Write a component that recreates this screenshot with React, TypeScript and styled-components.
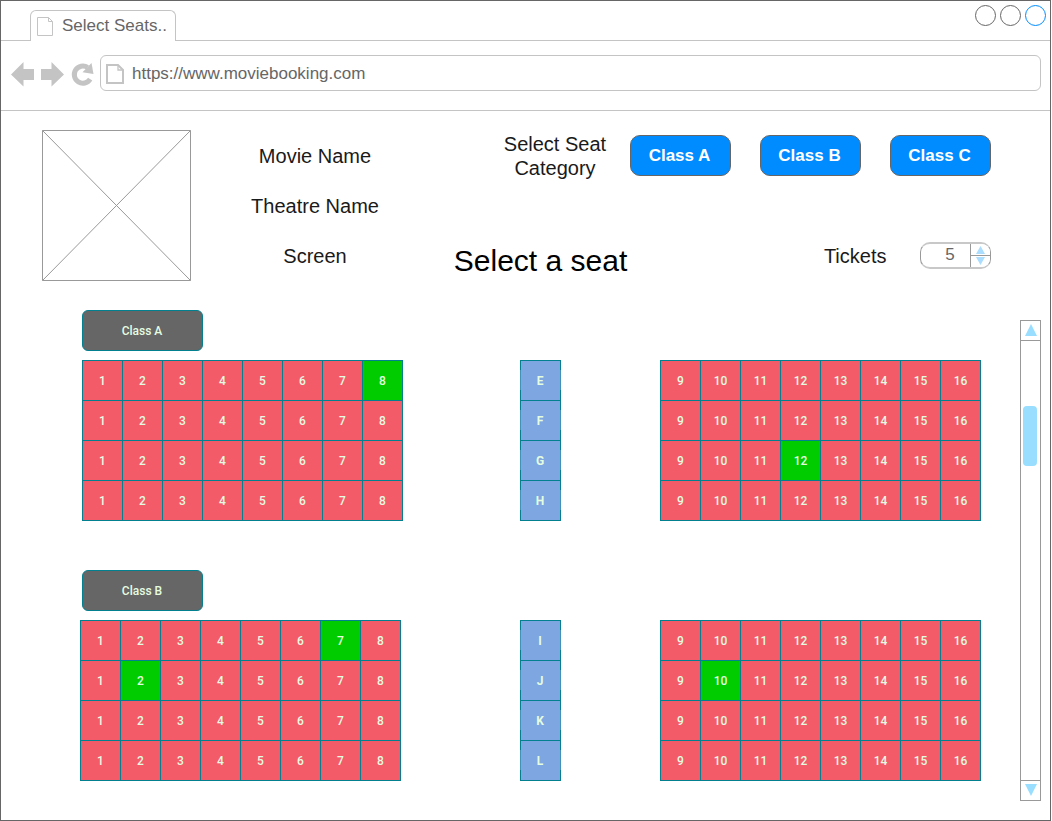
import React from "react";
import styled, { createGlobalStyle } from "styled-components";

const GlobalStyle = createGlobalStyle`
  *, *::before, *::after { box-sizing: border-box; }
  body { margin: 0; background: #fff; font-family: "Liberation Sans", Arial, sans-serif; }
  button { font: inherit; padding: 0; cursor: pointer; }
`;

const BrowserWindow = styled.div`
  display: flex;
  flex-direction: column;
  width: 1051px;
  height: 821px;
  border: 1px solid #666;
  background: #fff;
`;

const TabBar = styled.header`
  display: flex;
  justify-content: space-between;
  height: 40px;
  padding: 9px 4px 0 29px;
  border-bottom: 1px solid #c4c4c4;
`;

const Tab = styled.div`
  display: flex;
  align-items: center;
  gap: 9px;
  width: 146px;
  height: 31px;
  padding: 0 0 0 6px;
  border: 1px solid #c4c4c4;
  border-bottom: 0;
  border-radius: 6px 6px 0 0;
  background: #fff;
  color: #666;
  font-size: 17px;
  white-space: nowrap;
`;

const WindowControls = styled.div`
  display: flex;
  gap: 4px;
  margin-top: -5px;
`;

const Control = styled.span<{ $color: string }>`
  width: 21px;
  height: 21px;
  border: 1px solid ${(p) => p.$color};
  border-radius: 50%;
`;

const NavBar = styled.nav`
  display: flex;
  align-items: flex-start;
  height: 70px;
  padding: 14px 9px 0 10px;
  border-bottom: 1px solid #c4c4c4;
`;

const NavIcons = styled.svg`
  flex: none;
  width: 89px;
  height: 36px;
  fill: #c4c4c4;
`;

const AddressBar = styled.div`
  display: flex;
  flex: 1;
  align-items: center;
  gap: 8px;
  height: 36px;
  padding: 2px 5px 0;
  border: 1px solid #c4c4c4;
  border-radius: 6px;
  color: #666;
  font-size: 17px;
`;

const Summary = styled.section`
  display: flex;
  height: 170px;
  padding: 19px 59px 0 41px;
`;

const Poster = styled.svg`
  flex: none;
  width: 149px;
  height: 151px;
  fill: none;
  stroke: #999;
`;

const MovieInfo = styled.div`
  width: 248px;
  padding-top: 1px;
  font-size: 20px;
  line-height: 50px;
  text-align: center;
  color: #1a1a1a;
`;

const Booking = styled.div`
  display: flex;
  flex: 1;
  flex-direction: column;
`;

const CategoryRow = styled.div`
  display: flex;
  align-items: flex-start;
  justify-content: flex-end;
  gap: 29px;
  padding-top: 5px;
`;

const CategoryLabel = styled.div`
  width: 110px;
  margin: -3px -9px 0 0;
  font-size: 20px;
  line-height: 24px;
  text-align: center;
  color: #1a1a1a;
`;

const CategoryButton = styled.button`
  width: 101px;
  height: 41px;
  padding-right: 2px;
  border: 1px solid #666;
  border-radius: 10px;
  background: #008cff;
  color: #fff;
  font-size: 17px;
  font-weight: 700;
`;

const TicketRow = styled.div`
  display: flex;
  align-items: center;
  height: 40px;
  margin-top: 58px;
`;

const Heading = styled.h1`
  width: 203px;
  margin: 5px 0 0;
  font-size: 30px;
  font-weight: 400;
  line-height: 40px;
  text-align: center;
  color: #000;
`;

const TicketLabel = styled.span`
  margin: -3px 33.5px 0 auto;
  font-size: 20px;
  color: #1a1a1a;
`;

const Spinner = styled.div`
  display: flex;
  width: 71px;
  height: 27px;
  margin-top: -5px;
  overflow: hidden;
  border: solid;
  border-color: #c8c8c8 #999;
  border-width: 2px 1px;
  border-radius: 10px;
`;

const SpinnerValue = styled.span`
  flex: 1;
  padding-left: 9px;
  font-size: 17px;
  line-height: 22px;
  text-align: center;
  color: #666;
`;

const SpinnerButtons = styled.div`
  display: flex;
  flex-direction: column;
  width: 20px;
  border-left: 1px solid #999;
`;

const StepButton = styled.button`
  display: flex;
  align-items: flex-end;
  justify-content: center;
  height: 11px;
  padding-bottom: 1px;
  border: 0;
  background: #fff;

  & + & {
    align-items: flex-start;
    height: 12px;
    padding: 1px 0 0;
    border-top: 1px solid #999;
  }
`;

const SeatArea = styled.main`
  display: flex;
  justify-content: space-between;
  padding: 29px 9px 0 0;
`;

const Halls = styled.div`
  display: flex;
  flex-direction: column;
  gap: 49px;
  width: 980px;
`;

const ClassTag = styled.div`
  display: flex;
  align-items: center;
  justify-content: center;
  width: 121px;
  height: 41px;
  margin: 0 0 9px 81px;
  padding-right: 1px;
  border: 1px solid #028090;
  border-radius: 6px;
  background: #666;
  color: #e4fde1;
  font: 500 12px Roboto, sans-serif;
`;

const HallRow = styled.div<{ $indent: number }>`
  display: flex;
  padding-left: ${(p) => p.$indent}px;
`;

const SeatBlock = styled.div`
  display: grid;
  grid-template-columns: repeat(8, 39px);
  grid-auto-rows: 39px;
  gap: 1px;
  padding: 1px;
  background: #028090;
`;

const Cell = styled.div<{ $fill: string }>`
  display: flex;
  align-items: center;
  justify-content: center;
  background: ${(p) => p.$fill};
  color: #e4fde1;
  font: 500 12px Roboto, sans-serif;
`;

const RowLetters = styled.div`
  display: grid;
  grid-template-columns: 39px;
  grid-auto-rows: 39px;
  gap: 1px;
  margin: 0 99px 0 auto;
  padding: 1px;
  background: repeating-linear-gradient(#028090 0 10px, #3f93b8 10px 30px, #028090 30px 40px);
`;

const LetterCell = styled(Cell)`
  padding-right: 1px;
  box-shadow: 0 -1px #028090, 0 1px #028090;
  font-weight: 700;
`;

const Scrollbar = styled.div`
  display: flex;
  flex-direction: column;
  width: 21px;
  height: 481px;
  margin-top: 10px;
  border: 1px solid #999;
`;

const ScrollArrow = styled.button<{ $edge: "top" | "bottom" }>`
  display: flex;
  align-items: center;
  justify-content: center;
  height: 20px;
  padding-bottom: 2px;
  border: 0 solid #999;
  border-${(p) => (p.$edge === "top" ? "bottom" : "top")}-width: 1px;
  background: #fff;
`;

const Track = styled.div`
  flex: 1;
  padding: 65px 3px 0 2px;
`;

const Thumb = styled.div`
  height: 60px;
  border-radius: 4px;
  background: #99ddff;
`;

const PageIcon = ({ bold = false }: { bold?: boolean }) =>
  bold ? (
    <svg width="18" height="20" viewBox="0 0 18 20" fill="none" stroke="#c4c4c4" strokeWidth="2">
      <path d="M1 1H12L17 6V19H1Z" />
      <path d="M12 1V6H17" strokeWidth="1.3" />
    </svg>
  ) : (
    <svg width="16" height="19" viewBox="0 0 16 19" fill="none" stroke="#c4c4c4">
      <path d="M.5.5H11.5L15.5 4.5V18.5H.5Z" />
      <path d="M11.5.5V4.5H15.5" />
    </svg>
  );

const Triangle = ({ w, h, down = false, fill }: { w: number; h: number; down?: boolean; fill: string }) => (
  <svg width={w} height={h} viewBox="0 0 10 10" preserveAspectRatio="none" fill={fill}>
    <path d={down ? "M0 0H10L5 10Z" : "M0 10H10L5 0Z"} />
  </svg>
);

interface Hall {
  name: string;
  indent: number;
  letters: string[];
  picked: string[];
}

const halls: Hall[] = [
  { name: "Class A", indent: 81, letters: ["E", "F", "G", "H"], picked: ["E8", "G12"] },
  { name: "Class B", indent: 79, letters: ["I", "J", "K", "L"], picked: ["I7", "J2", "J10"] },
];

const Seats = ({ hall, first }: { hall: Hall; first: number }) => (
  <SeatBlock>
    {hall.letters.flatMap((letter) =>
      Array.from({ length: 8 }, (_, i) => first + i).map((n) => (
        <Cell key={letter + n} $fill={hall.picked.includes(letter + n) ? "#00cc00" : "#f45b69"}>
          {n}
        </Cell>
      ))
    )}
  </SeatBlock>
);

export default function App() {
  return (
    <>
      <GlobalStyle />
      <BrowserWindow>
        <TabBar>
          <Tab>
            <PageIcon />
            Select Seats..
          </Tab>
          <WindowControls>
            <Control $color="#666" />
            <Control $color="#666" />
            <Control $color="#008cff" />
          </WindowControls>
        </TabBar>
        <NavBar>
          <NavIcons viewBox="11 55 89 36">
            <path d="M11 74.5L23.5 62V69H34V80H23.5V86.5Z" />
            <path d="M64 74.5L51.5 62V69H41V80H51.5V86.5Z" />
            <path
              d="M90.2 79.2A8.6 8.6 0 1 1 87.6 67.4"
              fill="none"
              stroke="#c4c4c4"
              strokeWidth="5"
            />
            <path d="M91.5 63L93.5 74L82.5 72.2Z" />
          </NavIcons>
          <AddressBar>
            <PageIcon bold />
            https://www.moviebooking.com
          </AddressBar>
        </NavBar>
        <Summary>
          <Poster>
            <path d="M.5.5H148.5V150.5H.5Z" />
            <path d="M.5.5L148.5 150.5M148.5.5L.5 150.5" />
          </Poster>
          <MovieInfo>
            <div>Movie Name</div>
            <div>Theatre Name</div>
            <div>Screen</div>
          </MovieInfo>
          <Booking>
            <CategoryRow>
              <CategoryLabel>Select Seat Category</CategoryLabel>
              <CategoryButton>Class A</CategoryButton>
              <CategoryButton>Class B</CategoryButton>
              <CategoryButton>Class C</CategoryButton>
            </CategoryRow>
            <TicketRow>
              <Heading>Select a seat</Heading>
              <TicketLabel>Tickets</TicketLabel>
              <Spinner>
                <SpinnerValue>5</SpinnerValue>
                <SpinnerButtons>
                  <StepButton aria-label="More tickets">
                    <Triangle w={9} h={8} fill="#aaddff" />
                  </StepButton>
                  <StepButton aria-label="Fewer tickets">
                    <Triangle w={9} h={8} down fill="#aaddff" />
                  </StepButton>
                </SpinnerButtons>
              </Spinner>
            </TicketRow>
          </Booking>
        </Summary>
        <SeatArea>
          <Halls>
            {halls.map((hall) => (
              <section key={hall.name}>
                <ClassTag>{hall.name}</ClassTag>
                <HallRow $indent={hall.indent}>
                  <Seats hall={hall} first={1} />
                  <RowLetters>
                    {hall.letters.map((letter) => (
                      <LetterCell key={letter} $fill="#7ea6e0">
                        {letter}
                      </LetterCell>
                    ))}
                  </RowLetters>
                  <Seats hall={hall} first={9} />
                </HallRow>
              </section>
            ))}
          </Halls>
          <Scrollbar>
            <ScrollArrow $edge="top" aria-label="Scroll up">
              <Triangle w={12} h={12} fill="#99ddff" />
            </ScrollArrow>
            <Track>
              <Thumb />
            </Track>
            <ScrollArrow $edge="bottom" aria-label="Scroll down">
              <Triangle w={12} h={12} down fill="#99ddff" />
            </ScrollArrow>
          </Scrollbar>
        </SeatArea>
      </BrowserWindow>
    </>
  );
}
